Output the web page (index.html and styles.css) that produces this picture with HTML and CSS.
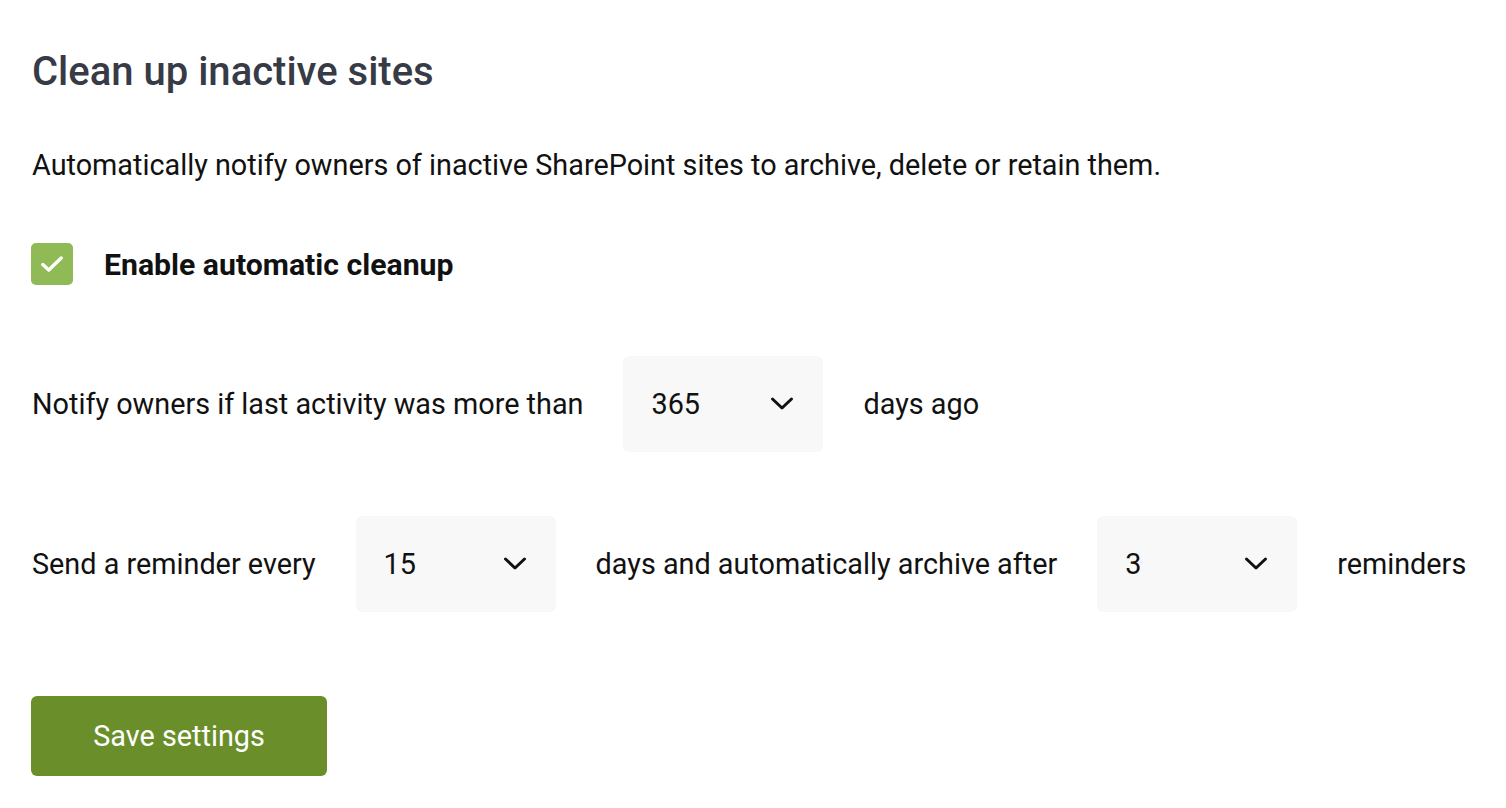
FILE: index.html
```html
<!DOCTYPE html>
<html>
<head>
<meta charset="utf-8">
<link rel="stylesheet" href="styles.css">
</head>
<body>
<main class="page">
  <h1 class="title">Clean up inactive sites</h1>
  <p class="desc">Automatically notify owners of inactive SharePoint sites to archive, delete or retain them.</p>
  <div class="check-row">
    <span class="checkbox">
      <svg class="tick" viewBox="0 0 24 24"><path d="M3.5 12.5 L9 17.5 L20.5 6.5" fill="none" stroke="#fff" stroke-width="3.2" stroke-linecap="round" stroke-linejoin="round"/></svg>
    </span>
    <span class="check-label">Enable automatic cleanup</span>
  </div>
  <div class="row row-1">
    <span>Notify owners if last activity was more than</span>
    <div class="select"><span>365</span><svg class="chev" viewBox="0 0 24 24"><path d="M2.5 7 L12 16 L21.5 7" fill="none" stroke="#111" stroke-width="3" stroke-linecap="round" stroke-linejoin="round"/></svg></div>
    <span>days ago</span>
  </div>
  <div class="row row-2">
    <span>Send a reminder every</span>
    <div class="select"><span>15</span><svg class="chev" viewBox="0 0 24 24"><path d="M2.5 7 L12 16 L21.5 7" fill="none" stroke="#111" stroke-width="3" stroke-linecap="round" stroke-linejoin="round"/></svg></div>
    <span>days and automatically archive after</span>
    <div class="select"><span>3</span><svg class="chev" viewBox="0 0 24 24"><path d="M2.5 7 L12 16 L21.5 7" fill="none" stroke="#111" stroke-width="3" stroke-linecap="round" stroke-linejoin="round"/></svg></div>
    <span>reminders</span>
  </div>
  <button class="save">Save settings</button>
</main>
</body>
</html>
```
FILE: styles.css
```css
html, body { margin: 0; padding: 0; background: #fff; }
body { font-family: Roboto, "Noto Sans", sans-serif; color: #111; }
.page { padding: 46px 32px 0 32px; display: flex; flex-direction: column; align-items: flex-start; }
.title { margin: 0; font-size: 40px; font-weight: 500; color: #373b46; line-height: 52px; }
.desc { margin: 49px 0 0 0; font-size: 28.8px; line-height: 36px; }
.check-row { display: flex; align-items: center; gap: 31px; margin-top: 60px; }
.checkbox { width: 42px; height: 42px; flex: none; border-radius: 5px; background: #8fba55; display: flex; align-items: center; justify-content: center; margin-left: -1px; }
.tick { display: block; width: 26px; height: 26px; flex: none; }
.check-label { font-size: 30.2px; font-weight: 700; }
.row { display: flex; align-items: center; gap: 40px; font-size: 28.8px; }
.row-1 { margin-top: 71px; }
.row-2 { margin-top: 64px; }
.select { width: 200px; height: 96px; box-sizing: border-box; background: #f8f8f8; border-radius: 6px; display: flex; align-items: center; justify-content: space-between; padding: 0 29px 0 28px; }
.chev { display: block; width: 24px; height: 24px; flex: none; }
.save { margin-top: 84px; margin-left: -1px; width: 296px; height: 80px; border: none; border-radius: 6px; background: #6a8f2a; color: #fff; font-family: Roboto, sans-serif; font-size: 28.8px; }
```
